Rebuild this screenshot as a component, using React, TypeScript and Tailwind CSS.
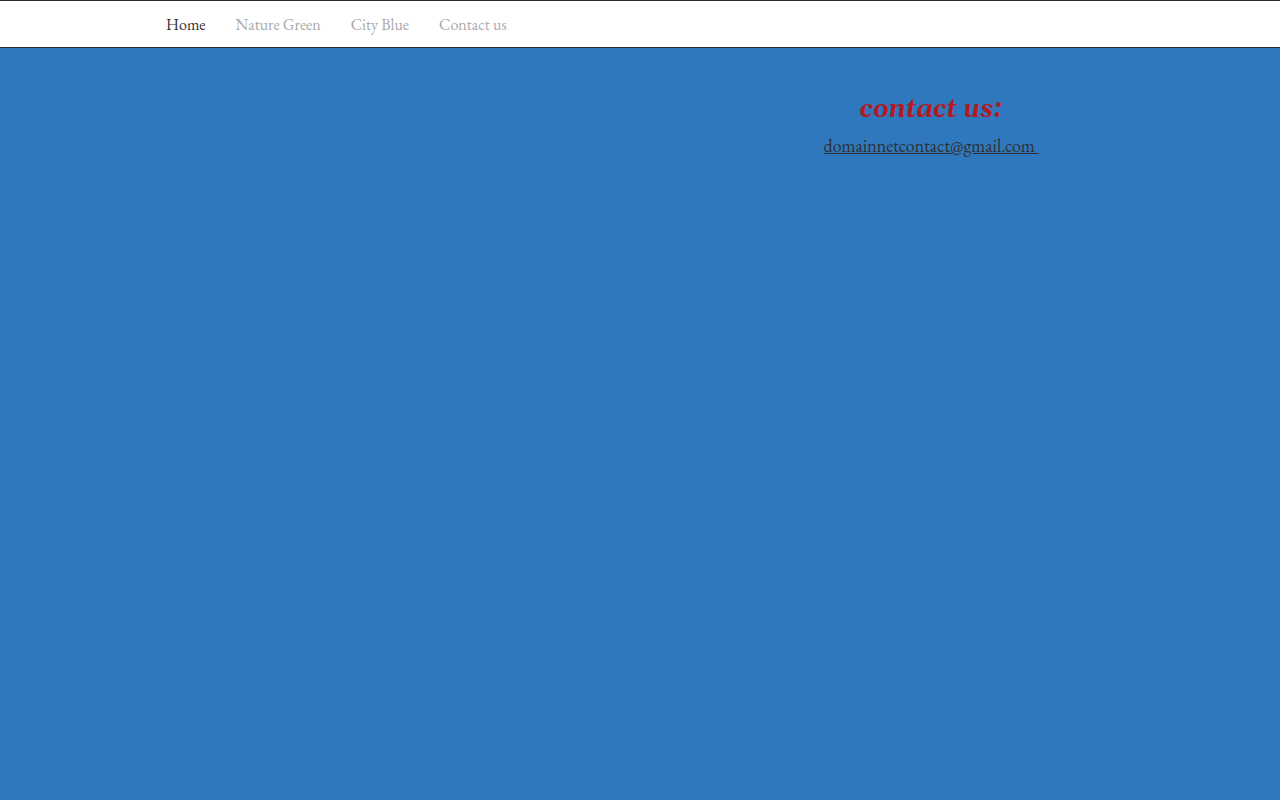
interface NavItem {
  label: string
  href: string
  active?: boolean
}

const navItems: NavItem[] = [
  { label: 'Home', href: '#home', active: true },
  { label: 'Nature Green', href: '#nature-green' },
  { label: 'City Blue', href: '#city-blue' },
  { label: 'Contact us', href: '#contact' },
]

function Header() {
  return (
    <header className="border-y border-[#2f2e2e] bg-white">
      <nav className="mx-auto flex w-full max-w-[980px] items-center gap-[30px] px-4 pt-3 pb-[10px]">
        {navItems.map((item) => (
          <a
            key={item.label}
            href={item.href}
            className={item.active ? 'text-[#2f2e2e]' : 'text-[#a9a9a9] hover:text-[#2f2e2e]'}
          >
            {item.label}
          </a>
        ))}
      </nav>
    </header>
  )
}

export default function App() {
  return (
    <div className="flex min-h-screen flex-col bg-[#2f78be] font-['EB_Garamond','Liberation_Serif',serif] text-base">
      <Header />

      <main className="mx-auto w-full max-w-[980px]">
        {/* Contact details */}
        <section className="ml-auto w-full max-w-[398px] pt-11 text-center">
          <h1 className="font-[Georgia,Gelasio,'DejaVu_Serif',serif] text-[25px] leading-[36px] font-bold text-[#b41820] italic">
            contact us:
          </h1>
          <p className="mt-1 text-lg leading-[27px]">
            <a href="mailto:domainnetcontact@gmail.com" className="text-[#2f2e2e] underline">
              domainnetcontact@gmail.com&nbsp;
            </a>
          </p>
        </section>
      </main>
    </div>
  )
}
